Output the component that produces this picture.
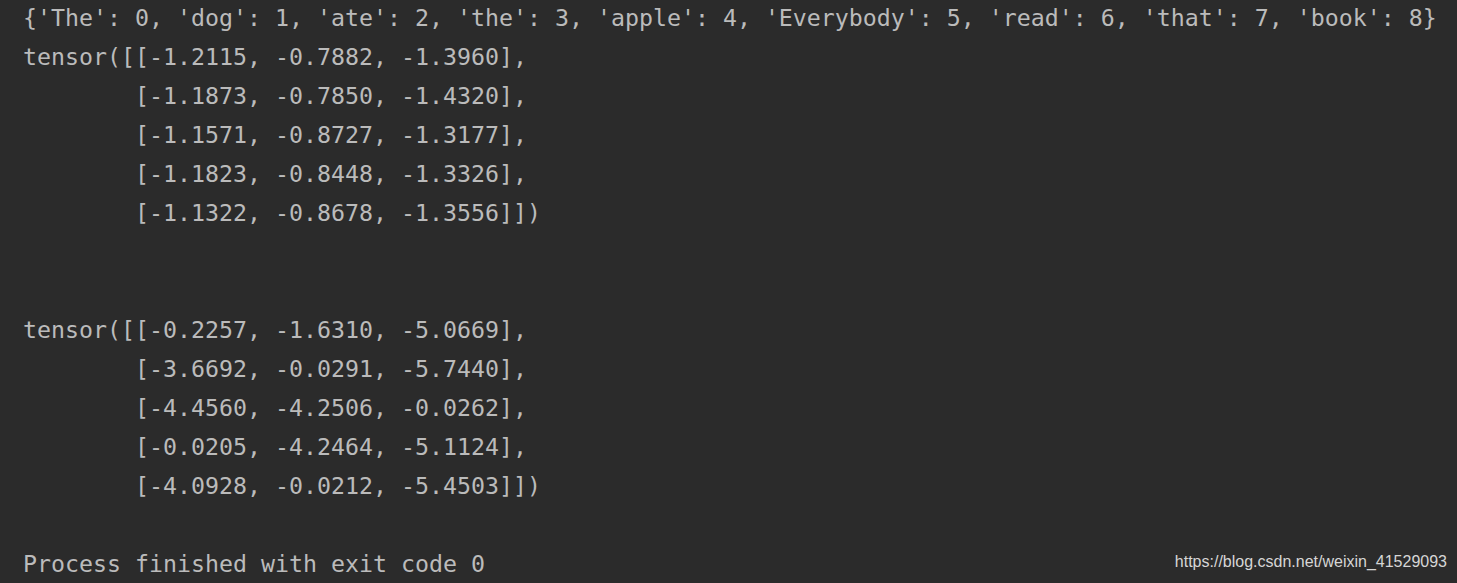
const lines = [
  "{'The': 0, 'dog': 1, 'ate': 2, 'the': 3, 'apple': 4, 'Everybody': 5, 'read': 6, 'that': 7, 'book': 8}",
  "tensor([[-1.2115, -0.7882, -1.3960],",
  "        [-1.1873, -0.7850, -1.4320],",
  "        [-1.1571, -0.8727, -1.3177],",
  "        [-1.1823, -0.8448, -1.3326],",
  "        [-1.1322, -0.8678, -1.3556]])",
  "",
  "",
  "tensor([[-0.2257, -1.6310, -5.0669],",
  "        [-3.6692, -0.0291, -5.7440],",
  "        [-4.4560, -4.2506, -0.0262],",
  "        [-0.0205, -4.2464, -5.1124],",
  "        [-4.0928, -0.0212, -5.4503]])",
  "",
  "Process finished with exit code 0",
];

export default function App() {
  return (
    <div className="relative w-[1457px] h-[583px] overflow-hidden bg-[#2b2b2b]">
      {/* console output */}
      <div className="-mt-[2px] pl-[23px] font-['DejaVu_Sans_Mono',monospace] text-[23.25px] leading-[39px] text-[#bbbbbb] whitespace-pre">
        {lines.map((line, i) => (
          <div key={i} className="h-[39px]">
            {line}
          </div>
        ))}
      </div>

      {/* watermark */}
      <div className="absolute right-[10px] bottom-[9px] font-['Liberation_Sans',Arial,sans-serif] text-[16px] text-[#d6d6d6]">
        https://blog.csdn.net/weixin_41529093
      </div>
    </div>
  );
}
